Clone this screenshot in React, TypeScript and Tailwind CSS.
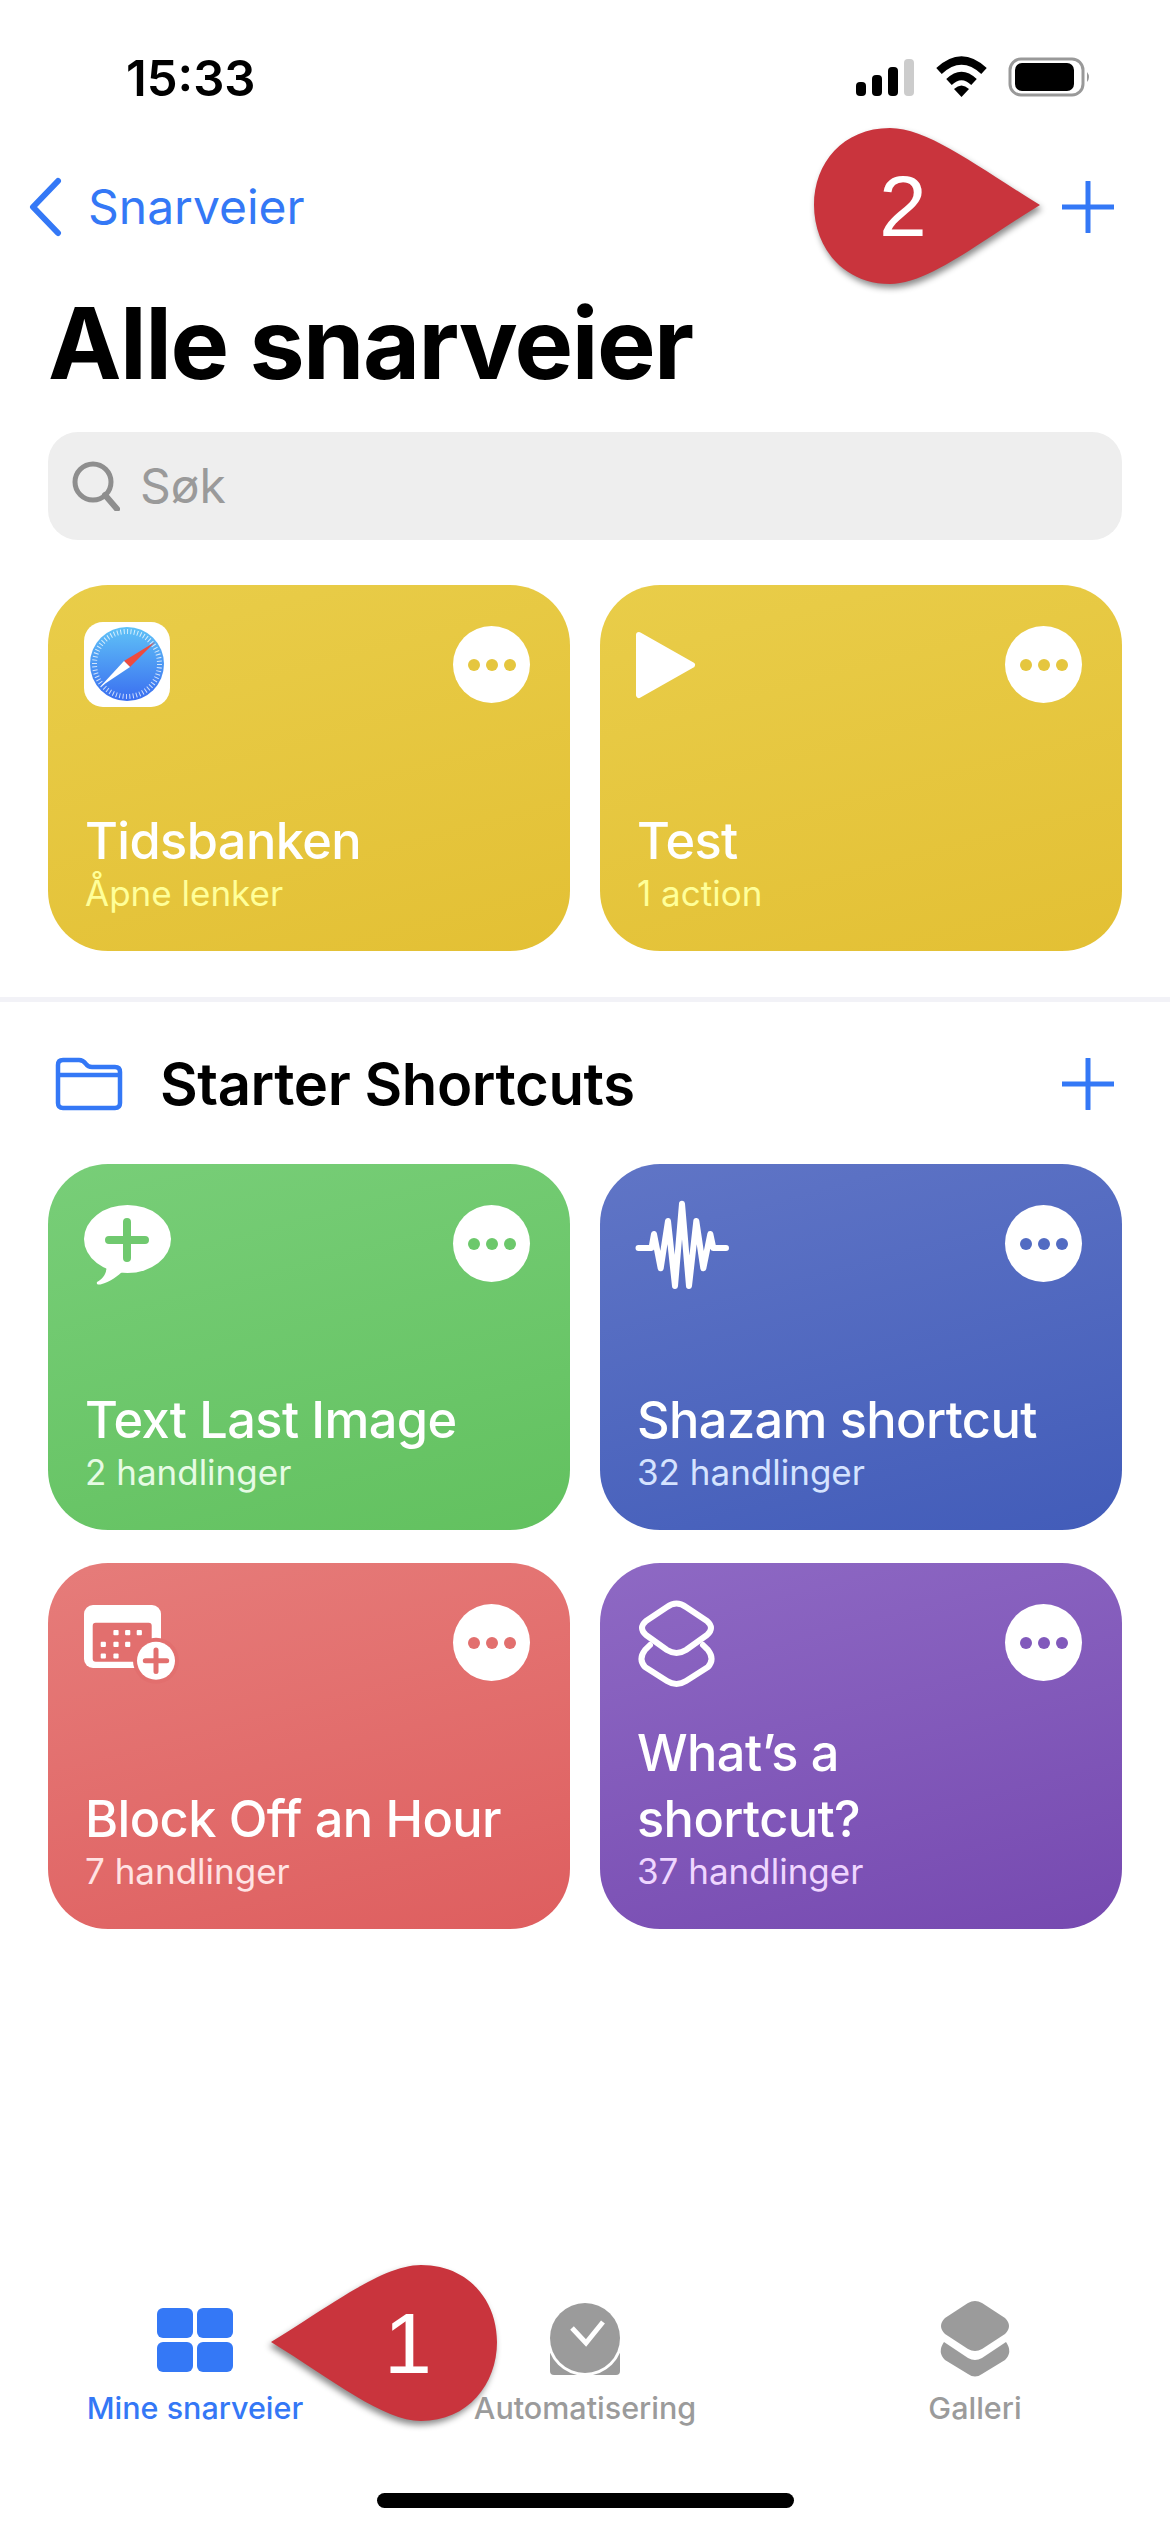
import type { ReactNode } from "react";

/* Shortcuts app, "Alle snarveier" screen with two red callouts on top. */

const BLUE = "#3478f6";

interface Shortcut {
  title: string;
  sub: string;
  gradient: string;
  subColor: string;
  dotColor: string;
  icon: ReactNode;
}

function SafariIcon() {
  return (
    <svg width="120" height="120" viewBox="0 0 120 120">
      <defs>
        <linearGradient id="safari" x1="0" y1="0" x2="0" y2="1">
          <stop offset="0" stopColor="#5fc2f7" />
          <stop offset="1" stopColor="#3a6ef0" />
        </linearGradient>
      </defs>
      <rect x="6" y="17" width="86" height="85" rx="19" fill="#fff" />
      <circle cx="49" cy="59" r="37" fill="url(#safari)" />
      <circle cx="49" cy="59" r="32.5" fill="none" stroke="#fff" strokeOpacity="0.75" strokeWidth="5" strokeDasharray="1 2.4" />
      <path d="M77 37 L46 56 L52 62 Z" fill="#ee4b3e" />
      <path d="M22 82 L46 56 L52 62 Z" fill="#fff" />
    </svg>
  );
}

function PlayIcon() {
  return (
    <svg width="120" height="120" viewBox="0 0 120 120">
      <path d="M9 30 L62 60 L9 90 Z" fill="#fff" stroke="#fff" strokeWidth="6" strokeLinejoin="round" />
    </svg>
  );
}

function BubbleIcon() {
  return (
    <svg width="120" height="120" viewBox="0 0 120 120">
      <ellipse cx="49.5" cy="55" rx="43.5" ry="34" fill="#fff" />
      <path d="M28 78 C30 88 26 94 19 98 C18 101 21 101 24 100 C32 98 40 92 46 86 Z" fill="#fff" />
      <path d="M49 38 V74 M31 56 H67" stroke="#70c96f" strokeWidth="8" strokeLinecap="round" />
    </svg>
  );
}

function WaveIcon() {
  return (
    <svg width="120" height="120" viewBox="0 0 120 120">
      <path
        d="M8.5 64 H21.5 L24 50 L30.7 84.3 L38 37 L45 102 L52 19.7 L59 102 L66.3 37 L73.3 84.3 L80.3 50 L83.3 64 H96"
        fill="none"
        stroke="#fff"
        strokeWidth="6"
        strokeLinecap="round"
        strokeLinejoin="round"
      />
    </svg>
  );
}

function CalendarIcon() {
  const dots = [
    [38, 49.7],
    [49.7, 49.7],
    [61.3, 49.7],
    [25.3, 61.3],
    [38, 61.3],
    [49.7, 61.3],
    [25.3, 73],
    [38, 73],
  ];
  return (
    <svg width="120" height="120" viewBox="0 0 120 120">
      <rect x="6" y="22" width="77" height="63" rx="9" fill="#fff" />
      <rect x="14.7" y="39.7" width="59" height="39" rx="3" fill="#e26f6e" />
      {dots.map(([x, y]) => (
        <rect key={`${x}-${y}`} x={x - 2.6} y={y - 2.6} width="5.2" height="5.2" rx="1" fill="#fff" />
      ))}
      <circle cx="78" cy="77.7" r="23" fill="#e26f6e" />
      <circle cx="78" cy="77.7" r="19" fill="#fff" />
      <path d="M78 67 V88.4 M67.3 77.7 H88.7" stroke="#e26f6e" strokeWidth="5" strokeLinecap="round" />
    </svg>
  );
}

function LayersIcon() {
  return (
    <svg width="120" height="120" viewBox="0 0 120 120">
      <path
        d="M37 24 Q46.5 17 56 24 L77 38 Q85 45 77 52 L56 67 Q46.5 73 37 67 L16 52 Q8 45 16 38 Z"
        fill="none"
        stroke="#fff"
        strokeWidth="6"
        strokeLinejoin="round"
      />
      <path
        d="M20 62 L15 67 Q8 76 15 84 L37 98 Q46.5 104 56 98 L78 84 Q85 76 78 67 L73 62"
        fill="none"
        stroke="#fff"
        strokeWidth="6"
        strokeLinecap="round"
      />
    </svg>
  );
}

const PINNED: Shortcut[] = [
  {
    title: "Tidsbanken",
    sub: "Åpne lenker",
    gradient: "from-[#e9cd49] to-[#e3c034]",
    subColor: "text-[#ffff99]",
    dotColor: "bg-[#e5c63e]",
    icon: <SafariIcon />,
  },
  {
    title: "Test",
    sub: "1 action",
    gradient: "from-[#e9cd49] to-[#e3c034]",
    subColor: "text-[#ffff99]",
    dotColor: "bg-[#e5c63e]",
    icon: <PlayIcon />,
  },
];

const STARTER: Shortcut[] = [
  {
    title: "Text Last Image",
    sub: "2 handlinger",
    gradient: "from-[#78ce78] to-[#62c15f]",
    subColor: "text-[#e6fbe4]",
    dotColor: "bg-[#6cc86b]",
    icon: <BubbleIcon />,
  },
  {
    title: "Shazam shortcut",
    sub: "32 handlinger",
    gradient: "from-[#6075c6] to-[#425cb9]",
    subColor: "text-[#d5e3ff]",
    dotColor: "bg-[#526bc2]",
    icon: <WaveIcon />,
  },
  {
    title: "Block Off an Hour",
    sub: "7 handlinger",
    gradient: "from-[#e67c7a] to-[#de5e5f]",
    subColor: "text-[#ffe3e3]",
    dotColor: "bg-[#e26f6e]",
    icon: <CalendarIcon />,
  },
  {
    title: "What’s a\nshortcut?",
    sub: "37 handlinger",
    gradient: "from-[#8e69c4] to-[#7649b0]",
    subColor: "text-[#efd6ff]",
    dotColor: "bg-[#8159bb]",
    icon: <LayersIcon />,
  },
];

function PlusIcon() {
  return (
    <svg width="52" height="52" viewBox="0 0 52 52" className="shrink-0">
      <path d="M26 1 V51 M0.5 26 H51.5" stroke={BLUE} strokeWidth="5" strokeLinecap="round" />
    </svg>
  );
}

function StatusIcons() {
  return (
    <svg width="240" height="44" viewBox="856 56 240 44">
      <rect x="856" y="82" width="10" height="14" rx="4" />
      <rect x="872" y="75" width="10" height="21" rx="4" />
      <rect x="888" y="67" width="10" height="29" rx="4" />
      <rect x="904" y="59" width="10" height="37" rx="4" fill="#cccccc" />
      <path d="M939 71 Q961.5 50 984 71" fill="none" stroke="#000" strokeWidth="8" />
      <path d="M949 82 Q961.5 70 974 82" fill="none" stroke="#000" strokeWidth="8" />
      <path d="M954 89 Q961.5 82 969 89 L961.5 97 Z" />
      <rect x="1010" y="59" width="73" height="36" rx="11" fill="none" stroke="#999999" strokeWidth="3" />
      <rect x="1015" y="63" width="59" height="28" rx="7" />
      <path d="M1087 72 Q1091 77 1087 82 Z" fill="#999999" />
    </svg>
  );
}

function ShortcutCard({ item }: { item: Shortcut }) {
  return (
    <div className={`flex h-[366px] w-[522px] flex-col justify-between rounded-[60px] bg-linear-165 pb-[38px] pl-[30px] pr-[40px] pt-[20px] ${item.gradient}`}>
      <div className="flex items-start justify-between">
        {item.icon}
        <div className="mt-[21px] flex h-[77px] w-[77px] items-center justify-center gap-[6px] rounded-full bg-white">
          <span className={`h-[12px] w-[12px] rounded-full ${item.dotColor}`} />
          <span className={`h-[12px] w-[12px] rounded-full ${item.dotColor}`} />
          <span className={`h-[12px] w-[12px] rounded-full ${item.dotColor}`} />
        </div>
      </div>
      <div className="pl-[7px]">
        <div className="whitespace-pre-line text-[50.5px] font-[550] leading-[66px] tracking-[-0.6px] text-white">{item.title}</div>
        <div className={`text-[35px] leading-[39px] ${item.subColor}`}>{item.sub}</div>
      </div>
    </div>
  );
}

function TabBar() {
  return (
    <div className="grid grid-cols-3">
      <div className="flex flex-col items-center">
        <div className="flex h-[80px] items-center">
          <div className="grid grid-cols-2 gap-[4px]">
            <span className="h-[30px] w-[36px] rounded-[6px] bg-[#3478f6]" />
            <span className="h-[30px] w-[36px] rounded-[6px] bg-[#3478f6]" />
            <span className="h-[30px] w-[36px] rounded-[6px] bg-[#3478f6]" />
            <span className="h-[30px] w-[36px] rounded-[6px] bg-[#3478f6]" />
          </div>
        </div>
        <span className="mt-[6px] text-[30.5px] font-medium leading-[44px] text-[#3478f6]">Mine snarveier</span>
      </div>
      <div className="flex flex-col items-center">
        <svg width="80" height="80" viewBox="0 0 80 80">
          <path d="M5 50 V71 Q5 75 9 75 H71 Q75 75 75 71 V50 Z" fill="#9b9b9b" />
          <circle cx="40" cy="38" r="38" fill="#fff" />
          <circle cx="40" cy="38" r="35" fill="#9b9b9b" />
          <path d="M27 28 L41 43 L58 22" fill="none" stroke="#fff" strokeWidth="5" />
        </svg>
        <span className="mt-[6px] text-[30.5px] font-medium leading-[44px] text-[#9b9b9b]">Automatisering</span>
      </div>
      <div className="flex flex-col items-center">
        <svg width="80" height="80" viewBox="0 0 80 80">
          <path d="M9 42 L33 58 Q40 62 47 58 L71 42 Q78 52 70 60 L47 74 Q40 79 33 74 L10 60 Q2 52 9 42 Z" fill="#9b9b9b" />
          <path d="M33 3 Q40 -1 47 3 L70 18 Q78 26 70 34 L47 49 Q40 53 33 49 L10 34 Q2 26 10 18 Z" fill="#9b9b9b" />
        </svg>
        <span className="mt-[6px] text-[30.5px] font-medium leading-[44px] text-[#9b9b9b]">Galleri</span>
      </div>
    </div>
  );
}

function Callout({ className, flip, label, labelClass }: { className: string; flip?: boolean; label: string; labelClass: string }) {
  return (
    <div className={`absolute flex items-center justify-center ${className}`}>
      <svg
        width="228"
        height="158"
        viewBox="0 0 228 158"
        className={`absolute inset-0 drop-shadow-[2px_4px_3px_rgba(0,0,0,0.45)] ${flip ? "-scale-x-100" : ""}`}
      >
        <path d="M77 1 C115 1 165 40 227 78 C165 116 115 157 77 157 C30 157 1 120 1 78 C1 36 30 1 77 1 Z" fill="#c9343d" />
      </svg>
      <span className={`relative font-['Liberation_Sans',sans-serif] text-[86px] leading-none text-white ${labelClass}`}>{label}</span>
    </div>
  );
}

export default function App() {
  return (
    <div className="relative flex h-[2532px] w-[1170px] flex-col overflow-hidden bg-white font-['Inter',sans-serif] text-black">
      {/* status bar */}
      <div className="flex h-[156px] items-center justify-between pl-[126px] pr-[74px]">
        <span className="text-[49px] font-semibold leading-none">15:33</span>
        <StatusIcons />
      </div>

      {/* nav bar */}
      <div className="mt-[25px] flex h-[52px] items-center justify-between pl-[28px] pr-[56px]">
        <div className="flex items-center gap-[26px]">
          <svg width="34" height="60" viewBox="0 0 34 60">
            <path d="M30 4 L5 30 L30 56" fill="none" stroke={BLUE} strokeWidth="6" strokeLinecap="round" strokeLinejoin="round" />
          </svg>
          <span className="text-[48px] leading-none text-[#3478f6]">Snarveier</span>
        </div>
        <PlusIcon />
      </div>

      <h1 className="mt-[50px] pl-[48px] text-[98.5px] font-bold leading-[122px] tracking-[-1.5px]">Alle snarveier</h1>

      {/* search */}
      <div className="mx-[48px] mt-[27px] flex h-[108px] items-center gap-[20px] rounded-[30px] bg-[#eeeeee] pl-[24px]">
        <svg width="48" height="50" viewBox="0 0 48 50">
          <circle cx="21" cy="21" r="18" fill="none" stroke="#8e8e8e" strokeWidth="5" />
          <path d="M33 34 L45 48" stroke="#8e8e8e" strokeWidth="6" strokeLinecap="round" />
        </svg>
        <span className="text-[48px] leading-none text-[#9a9a9a]">Søk</span>
      </div>

      <div className="mx-[48px] mt-[45px] grid grid-cols-[522px_522px] gap-x-[30px]">
        {PINNED.map((item) => (
          <ShortcutCard key={item.title} item={item} />
        ))}
      </div>

      <div className="mt-[46px] h-[5px] bg-[#f2f2f7]" />

      {/* folder header */}
      <div className="mt-[55px] flex h-[54px] items-center justify-between pl-[55px] pr-[56px]">
        <div className="flex items-center gap-[37px]">
          <svg width="68" height="54" viewBox="0 0 68 54">
            <path
              d="M3 46 V8 Q3 3 8 3 H24 Q28 3 31 7 Q33 10 37 10 H60 Q65 10 65 15 V46 Q65 51 60 51 H8 Q3 51 3 46 Z M3 18 H65"
              fill="none"
              stroke={BLUE}
              strokeWidth="4.5"
            />
          </svg>
          <span className="text-[58px] font-semibold leading-none tracking-[-0.4px]">Starter Shortcuts</span>
        </div>
        <PlusIcon />
      </div>

      <div className="mx-[48px] mt-[53px] grid grid-cols-[522px_522px] gap-x-[30px] gap-y-[33px]">
        {STARTER.map((item) => (
          <ShortcutCard key={item.title} item={item} />
        ))}
      </div>

      <div className="flex-1" />

      <div className="pb-[102px]">
        <TabBar />
      </div>

      {/* home indicator */}
      <div className="absolute bottom-[24px] left-[377px] h-[15px] w-[417px] rounded-full bg-black" />

      {/* red callouts */}
      <Callout className="left-[813px] top-[127px] h-[158px] w-[228px]" label="2" labelClass="-translate-x-[24px]" />
      <Callout className="left-[270px] top-[2264px] h-[158px] w-[228px]" flip label="1" labelClass="translate-x-[24px]" />
    </div>
  );
}
